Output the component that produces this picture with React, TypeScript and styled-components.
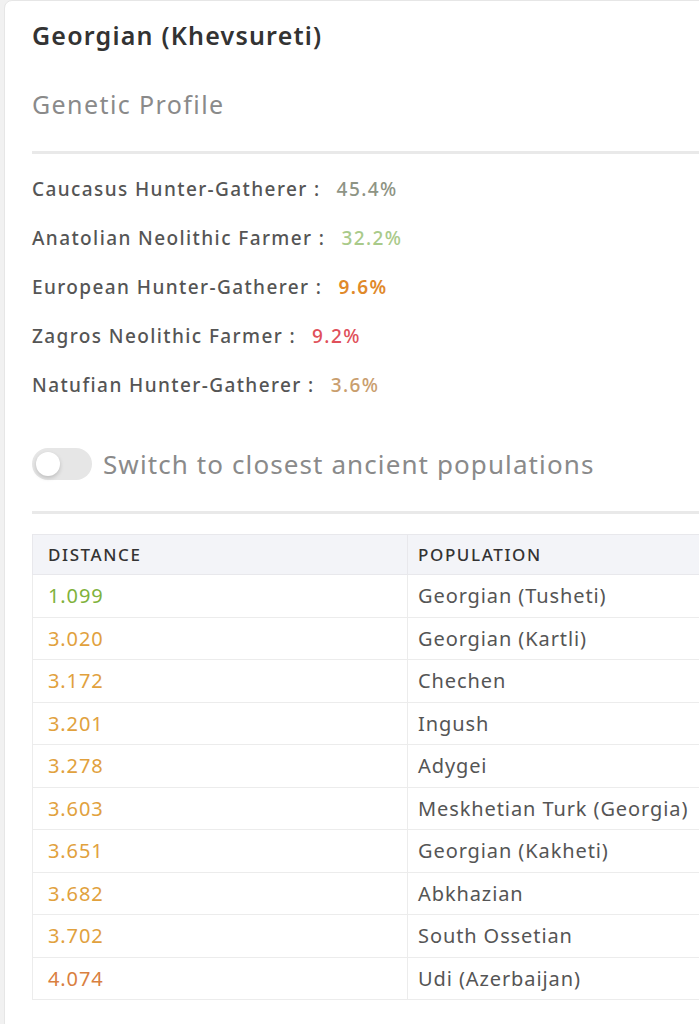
import React, { useState } from 'react';
import styled, { createGlobalStyle } from 'styled-components';

const GlobalStyle = createGlobalStyle`
  html, body {
    margin: 0;
    padding: 0;
    background: #f1f1f1;
    overflow: hidden;
  }
  body {
    font-family: "Noto Sans", "Open Sans", Arial, sans-serif;
  }
`;

const Card = styled.div`
  margin-left: 4px;
  width: 800px;
  min-height: 1040px;
  background: #ffffff;
  border: 1px solid #e6e6e6;
  border-radius: 8px;
  box-sizing: border-box;
  padding: 17px 0 0 27px;
`;

const Title = styled.h1`
  margin: 0;
  font-size: 25px;
  font-weight: 600;
  color: #333333;
  letter-spacing: 1.2px;
  line-height: 34px;
`;

const Subtitle = styled.h2`
  margin: 37px 0 0;
  font-size: 25px;
  font-weight: 400;
  color: #8a8a8a;
  letter-spacing: 1.4px;
  line-height: 30px;
`;

const Divider = styled.div<{ $top: number }>`
  margin-top: ${(p) => p.$top}px;
  height: 3px;
  background: #e9e9e9;
`;

const ProfileList = styled.div`
  margin-top: 10px;
  display: flex;
  flex-direction: column;
`;

const ProfileRow = styled.div`
  height: 49px;
  display: flex;
  align-items: center;
  font-size: 19px;
  letter-spacing: 1.4px;
`;

const Label = styled.span`
  color: #555555;
  font-weight: 500;
`;

const Value = styled.span<{ $color: string; $bold?: boolean }>`
  margin-left: 16px;
  color: ${(p) => p.$color};
  font-weight: ${(p) => (p.$bold ? 600 : 500)};
`;

const SwitchRow = styled.label`
  margin-top: 39px;
  display: flex;
  align-items: center;
  gap: 11px;
  cursor: pointer;
`;

const Track = styled.span<{ $on: boolean }>`
  position: relative;
  width: 60px;
  height: 32px;
  border-radius: 16px;
  background: ${(p) => (p.$on ? '#8bc34a' : '#e6e6e6')};
  flex-shrink: 0;
`;

const Knob = styled.span<{ $on: boolean }>`
  position: absolute;
  top: 4px;
  left: ${(p) => (p.$on ? '32px' : '4px')};
  width: 24px;
  height: 24px;
  border-radius: 50%;
  background: #ffffff;
  box-shadow: 0 2px 4px rgba(0, 0, 0, 0.18);
`;

const SwitchText = styled.span`
  font-size: 26px;
  line-height: 32px;
  color: #8a8a8a;
  letter-spacing: 1.1px;
`;

const Table = styled.table`
  margin-top: 20px;
  width: 760px;
  border-collapse: collapse;
  font-size: 20px;
`;

const HeadCell = styled.th`
  height: 39px;
  padding: 0 10px;
  text-align: left;
  background: #f3f4f8;
  border: 1px solid #e8e8ec;
  font-size: 17px;
  font-weight: 500;
  letter-spacing: 1.6px;
  color: #333333;
  &:first-child {
    width: 349px;
    padding-left: 15px;
  }
`;

const Cell = styled.td<{ $color?: string }>`
  height: 41.5px;
  padding: 0 10px;
  border: 1px solid #ececec;
  color: ${(p) => p.$color ?? '#555555'};
  letter-spacing: 0.9px;
  &:first-child {
    padding-left: 15px;
  }
`;

const profile = [
  { label: 'Caucasus Hunter-Gatherer :', value: '45.4%', color: '#8e9484' },
  { label: 'Anatolian Neolithic Farmer :', value: '32.2%', color: '#a9ca8a' },
  { label: 'European Hunter-Gatherer :', value: '9.6%', color: '#e0892a', bold: true },
  { label: 'Zagros Neolithic Farmer :', value: '9.2%', color: '#e0505a' },
  { label: 'Natufian Hunter-Gatherer :', value: '3.6%', color: '#c99e6e' },
];

const distances = [
  { d: '1.099', pop: 'Georgian (Tusheti)', color: '#7fb23c' },
  { d: '3.020', pop: 'Georgian (Kartli)', color: '#e1a13d' },
  { d: '3.172', pop: 'Chechen', color: '#e1a13d' },
  { d: '3.201', pop: 'Ingush', color: '#e1a13d' },
  { d: '3.278', pop: 'Adygei', color: '#e1a13d' },
  { d: '3.603', pop: 'Meskhetian Turk (Georgia)', color: '#e1a13d' },
  { d: '3.651', pop: 'Georgian (Kakheti)', color: '#e1a13d' },
  { d: '3.682', pop: 'Abkhazian', color: '#e1a13d' },
  { d: '3.702', pop: 'South Ossetian', color: '#e1a13d' },
  { d: '4.074', pop: 'Udi (Azerbaijan)', color: '#d9803f' },
];

const App: React.FC = () => {
  const [ancient, setAncient] = useState(false);

  return (
    <>
      <GlobalStyle />
      <Card>
        <Title>Georgian (Khevsureti)</Title>
        <Subtitle>Genetic Profile</Subtitle>
        <Divider $top={32} />
        <ProfileList>
          {profile.map((p) => (
            <ProfileRow key={p.label}>
              <Label>{p.label}</Label>
              <Value $color={p.color} $bold={p.bold}>
                {p.value}
              </Value>
            </ProfileRow>
          ))}
        </ProfileList>
        <SwitchRow onClick={() => setAncient(!ancient)}>
          <Track $on={ancient}>
            <Knob $on={ancient} />
          </Track>
          <SwitchText>Switch to closest ancient populations</SwitchText>
        </SwitchRow>
        <Divider $top={31} />
        <Table>
          <thead>
            <tr>
              <HeadCell>DISTANCE</HeadCell>
              <HeadCell>POPULATION</HeadCell>
            </tr>
          </thead>
          <tbody>
            {distances.map((r) => (
              <tr key={r.pop}>
                <Cell $color={r.color}>{r.d}</Cell>
                <Cell>{r.pop}</Cell>
              </tr>
            ))}
          </tbody>
        </Table>
      </Card>
    </>
  );
};

export default App;
